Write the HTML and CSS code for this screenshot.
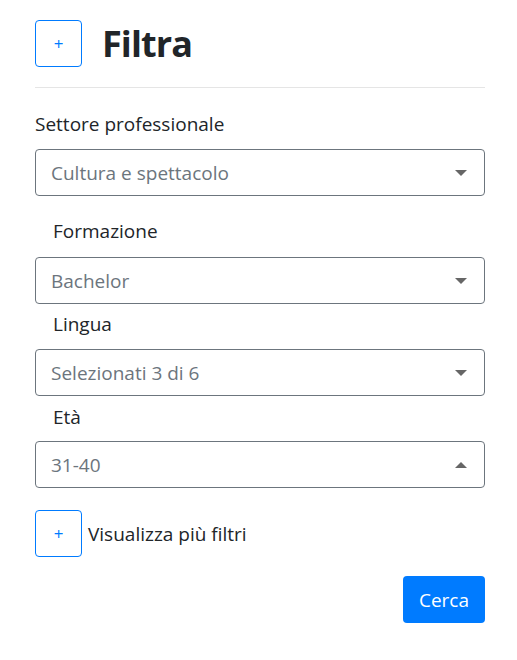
FILE: index.html
```html
<!DOCTYPE html>
<html lang="it">
<head>
<meta charset="utf-8">
<link rel="stylesheet" href="styles.css">
</head>
<body>
<div class="panel">
  <div class="head">
    <button class="plus-btn" type="button">+</button>
    <h1 class="title">Filtra</h1>
  </div>
  <hr class="divider">
  <div class="group g1">
    <label class="lbl">Settore professionale</label>
    <div class="select"><span>Cultura e spettacolo</span><i class="caret down"></i></div>
  </div>
  <div class="group g2">
    <label class="lbl indent">Formazione</label>
    <div class="select"><span>Bachelor</span><i class="caret down"></i></div>
  </div>
  <div class="group g3">
    <label class="lbl indent">Lingua</label>
    <div class="select"><span>Selezionati 3 di 6</span><i class="caret down"></i></div>
  </div>
  <div class="group g4">
    <label class="lbl indent">Età</label>
    <div class="select"><span>31-40</span><i class="caret up"></i></div>
  </div>
  <div class="more">
    <button class="plus-btn" type="button">+</button>
    <span class="more-text">Visualizza più filtri</span>
  </div>
  <div class="actions">
    <button class="search" type="button">Cerca</button>
  </div>
</div>
</body>
</html>
```
FILE: styles.css
```css
* { box-sizing: border-box; }
body {
  margin: 0;
  background: #fff;
  font-family: "Open Sans", "Noto Sans", sans-serif;
  color: #212529;
}
.panel {
  width: 450px;
  margin-left: 35px;
  padding-top: 20px;
}
.head {
  display: flex;
  align-items: center;
  height: 47px;
}
.plus-btn {
  width: 47px;
  height: 47px;
  border: 1px solid #007bff;
  border-radius: 4px;
  background: #fff;
  color: #007bff;
  font-family: inherit;
  font-size: 17px;
  font-weight: 400;
  padding: 0;
  flex: none;
}
.title {
  margin: 0 0 0 20px;
  font-size: 36px;
  font-weight: 700;
  letter-spacing: -0.9px;
  line-height: 47px;
  color: #212529;
}
.divider {
  border: 0;
  border-top: 1px solid #e5e5e5;
  margin: 20px 0 0;
}
.lbl {
  display: block;
  font-size: 19px;
  line-height: 27px;
}
.indent { padding-left: 18px; }
.g1 { margin-top: 23px; }
.g1 .lbl { margin-bottom: 11px; }
.g2 { margin-top: 22px; }
.g2 .lbl { margin-bottom: 12px; }
.g3 { margin-top: 7px; }
.g3 .lbl { margin-bottom: 11px; }
.g4 { margin-top: 8px; }
.g4 .lbl { margin-bottom: 10px; }
.select {
  display: flex;
  align-items: center;
  justify-content: space-between;
  height: 47px;
  border: 1px solid #6c757d;
  border-radius: 4px;
  padding: 0 17px 0 15px;
  font-size: 19px;
  color: #6c757d;
}
.caret {
  width: 0;
  height: 0;
  border-left: 6px solid transparent;
  border-right: 6px solid transparent;
}
.caret.down { border-top: 6px solid #666; }
.caret.up { border-bottom: 6px solid #666; }
.more {
  display: flex;
  align-items: center;
  gap: 6px;
  margin-top: 22px;
}
.more-text { font-size: 19px; }
.actions {
  display: flex;
  justify-content: flex-end;
  margin-top: 19px;
}
.search {
  width: 82px;
  height: 47px;
  border: 0;
  border-radius: 4px;
  background: #007bff;
  color: #fff;
  font-family: inherit;
  font-size: 19px;
}
```
